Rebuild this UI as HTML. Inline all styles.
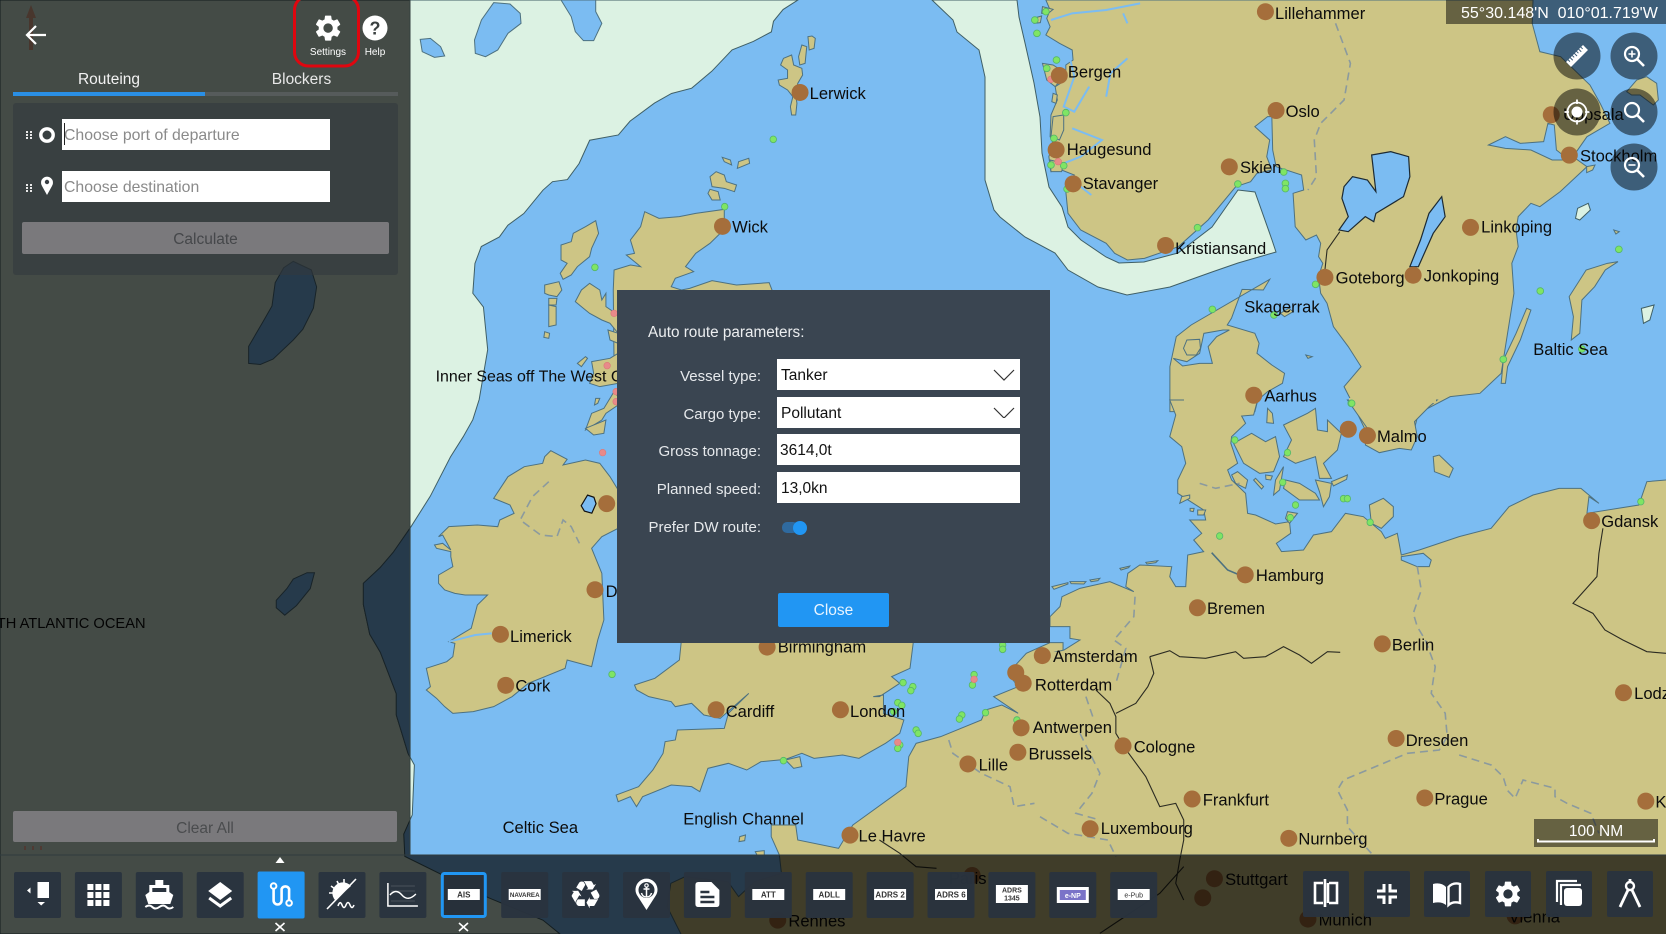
<!DOCTYPE html>
<html><head><meta charset="utf-8"><title>Route</title>
<style>
html,body{margin:0;padding:0;background:#7bbcf2}
#root{position:relative;width:1666px;height:934px;overflow:hidden;font-family:"Liberation Sans",sans-serif}
svg#map{position:absolute;left:0;top:0}
svg#map *{vector-effect:non-scaling-stroke}
.land{fill:#cdc585;stroke:#4d7180;stroke-width:1}
.sea{fill:#7bbcf2;stroke:#4d7180;stroke-width:1}
.lake{fill:#7bbcf2;stroke:#1c2a33;stroke-width:1.2}
.fj{fill:none;stroke:#7bbcf2;stroke-width:2}
.dash{fill:none;stroke:#8b9a9e;stroke-width:1.6;stroke-dasharray:8 5}
.bk{fill:none;stroke:#2b2b22;stroke-width:1.1}
.cd{fill:#a56e3b}
text.l{font-family:"Liberation Sans",sans-serif;font-size:15.6px;fill:#0c0c0c}
.tile{fill:#2a333e;fill-opacity:.96}
.lb{fill:#fff}
text.t{font-family:"Liberation Sans",sans-serif;font-size:8px;font-weight:bold;fill:#333;text-anchor:middle}
.w{fill:none;stroke:#fff}
#panel>div,#dlg>div{position:absolute}
.inp{background:#fff;color:#111;font-size:15.5px;line-height:33px;padding-left:4px;box-sizing:border-box}
.ph{color:#8a8a8a;padding-left:2px;font-size:15.8px}
.dl{color:#e6e9ec;font-size:15px;text-align:right;width:160px;left:-16px;line-height:20px}
</style></head><body><div id="root">
<svg id="map" width="1666" height="934" xmlns="http://www.w3.org/2000/svg">
<defs>
<ellipse id="gd" rx="8" ry="10" fill="#7fe564" stroke="#55b56a" stroke-width=".8"/>
<ellipse id="pd" rx="8" ry="10" fill="#e88a8a" stroke="#d77" stroke-width=".6"/>
</defs>
<rect width="1666" height="934" fill="#7bbcf2"/>

<!-- light green zones -->
<g fill="#dcf2e3" stroke="#3f5f66" stroke-width="1">
<path transform="scale(1.0625)" d="M0,0 L751,0 737,9 728,20 726,30 709,39 689,47 670,67 651,83 632,88 616,97 593,114 582,127 555,132 545,154 534,169 520,171 511,179 493,201 478,212 470,223 453,232 447,248 445,276 455,289 459,329 451,376 445,395 436,411 424,430 405,467 386,497 370,520 358,534 342,549 342,569 348,597 358,614 373,653 373,673 384,709 390,720 388,767 380,785 381,806 460,845 511,866 527,879 0,879 Z"/>
<path d="M932,0 953,20 957,32 979,50 985,77 985,110 985,180 994,210 1000,217 1025,237 1055,253 1068,270 1098,287 1127,295 1170,287 1212,272 1238,263 1276,252 1272,240 1255,192 1238,190 1212,227 1178,253 1144,262 1119,263 1106,257 1081,240 1068,227 1062,207 1049,187 1042,153 1040,117 1034,83 1025,43 1019,17 1017,0 Z"/>
</g>
<!-- deep pockets in the green zone -->
<g class="sea" transform="scale(1.0625)">
<path class="sea" d="M386,497 L386,713 384,709 373,673 373,653 358,614 348,597 342,569 342,549 358,534 370,520 Z"/>
<path class="sea" d="M276,246 293,254 298,270 295,290 285,310 276,320 257,338 245,343 234,342 234,326 248,302 256,288 259,266 267,252 Z"/>
<path class="sea" d="M296,539 292,554 279,570 268,579 260,572 260,565 270,554 276,545 289,539 Z"/>
</g>
<g transform="translate(410,0) scale(.40816,.33333)">
<path class="sea" d="M205,8 245,12 270,40 272,70 240,100 215,150 185,170 160,160 158,120 175,60 Z"/>
<path class="sea" d="M370,0 455,0 455,35 470,70 450,122 425,122 405,95 395,50 Z"/>
<path class="sea" d="M25,118 50,115 75,140 85,168 60,172 30,155 Z"/>
</g>

<!-- Z7: Scotland, islands -->
<g transform="translate(410,0) scale(.40816,.33333)" class="land">
<path class="land" d="M985,108 993,115 990,145 978,150 975,110Z"/>
<path class="land" d="M960,135 972,140 968,190 955,195 952,170Z"/>
<path class="land" d="M935,165 940,195 960,205 962,225 950,250 945,285 948,310 945,345 935,345 932,320 938,290 925,270 905,255 902,240 925,235 925,210 908,195 915,175Z"/>
<path class="land" d="M765,472 785,480 788,495 770,485Z"/>
<path class="land" d="M805,485 830,475 832,490 812,500 802,505Z"/>
<path class="land" d="M750,515 770,525 775,545 800,555 795,575 770,565 740,560 735,530Z"/>
<path class="land" d="M735,568 755,575 760,600 740,600 730,580Z"/>
<path class="land" d="M575,635 610,655 660,650 700,640 770,628 770,660 760,700 735,730 700,760 675,800 695,815 650,835 640,860 665,870 685,865 740,842 800,855 880,848 890,880 1000,1100 500,1100 498,870 500,810 540,795 565,800 530,765 550,760 540,720 565,680Z"/>
<path class="land" d="M455,662 462,700 445,745 440,770 410,800 395,825 375,838 368,820 385,790 370,780 370,735 395,725 400,700 430,680Z"/>
<path class="land" d="M330,855 365,845 372,870 360,890 340,885 330,880Z"/>
<path class="land" d="M340,895 360,895 358,915 340,915Z"/>
<path class="land" d="M340,915 358,920 358,975 340,980Z"/>
<path class="land" d="M330,995 342,1000 340,1015 328,1012Z"/>
<path class="land" d="M440,850 465,870 470,900 480,880 480,920 510,945 510,1000 490,970 470,960 440,940 425,925 405,905 420,870Z"/>
<path class="land" d="M485,990 510,1000 510,1030 490,1020Z"/>
<path class="land" d="M445,1085 490,1075 510,1060 510,1150 465,1160 440,1150 450,1120Z"/>
<path class="land" d="M500,1175 510,1190 510,1215 480,1240 470,1260 430,1290 445,1240 475,1225Z"/>
<path class="land" d="M455,1195 465,1195 460,1210 452,1215Z"/>
<path class="land" d="M410,1090 430,1070 435,1075 420,1100Z"/>
</g>

<!-- Z10: Ireland, England, France -->
<g transform="translate(410,420) scale(.40816,.33333)">
<path class="land" d="M345,92 385,118 375,135 430,120 465,130 490,170 510,210 510,325 470,350 445,385 470,460 475,600 460,660 445,740 385,720 380,745 330,770 290,790 250,830 205,860 155,875 105,880 85,860 65,835 40,810 50,800 40,745 90,725 105,710 110,670 95,665 150,625 165,555 190,525 135,525 110,520 85,510 70,490 70,465 105,440 100,410 100,395 65,385 60,375 80,370 100,390 80,345 70,350 95,320 165,315 215,320 220,300 255,280 245,255 205,235 240,170 280,140 325,130 330,110Z"/>
<path class="land" d="M670,600 1240,600 1225,745 1180,770 1200,790 1150,830 1135,830 1160,825 1160,880 1210,900 1200,940 1165,970 1100,1015 1060,1005 990,1015 960,1000 920,1018 860,1025 825,1050 780,1030 730,1045 710,1115 690,1100 640,1095 570,1130 555,1160 540,1130 510,1145 505,1125 560,1100 595,1050 620,1000 625,965 650,960 655,930 770,925 780,880 830,820 760,895 720,885 690,850 650,860 640,845 585,830 555,810 550,795 600,775 660,720Z"/>
<path class="land" d="M920,1020 955,1010 960,1040 940,1045Z"/>
<path class="land" d="M1085,1215 1215,1100 1222,1010 1240,970 1300,950 1400,900 1410,870 1450,855 1490,880 1430,830 1490,800 1465,760 1510,700 1568,668 1600,668 1600,1545 665,1545 630,1460 639,1390 674,1370 779,1385 805,1430 844,1385 910,1360 905,1305 885,1250 885,1215 945,1215 950,1260 1050,1285Z"/>
<path class="land" d="M808,1250 822,1245 820,1262 806,1265Z"/>
<path class="land" d="M846,1295 868,1292 868,1305 850,1305Z"/>
<path class="land" d="M430,25 480,0 475,40 450,45Z"/>
<path class="dash" d="M340,185 300,230 270,300 320,345 360,350 375,300 395,320 415,370"/>
<path class="dash" d="M1320,960 1330,1000 1400,1060 1470,1100 1480,1160 1530,1150"/>
<path class="bk" d="M1150,1260 1200,1300 1240,1340 1290,1345"/>
<path class="fj" d="M95,665 160,645 200,640"/>
</g>

<!-- Z8: Scandinavia -->
<g transform="translate(1000,0) scale(.42474,.33333)">
<path class="land" d="M108,0 118,30 110,55 118,80 108,105 140,130 170,150 172,180 155,195 155,240 130,260 135,300 120,345 118,410 125,430 115,470 120,515 145,510 175,525 155,575 160,640 190,690 250,730 270,760 300,780 340,775 420,740 490,660 555,560 590,545 605,520 640,510 628,470 635,420 600,380 630,350 640,350 642,450 650,500 710,525 715,570 690,580 695,680 720,720 745,705 755,730 750,770 760,790 750,830 755,880 770,910 785,980 820,1040 850,1100 830,1130 810,1160 830,1210 860,1290 975,1290 985,1240 1060,1190 1130,1180 1180,1120 1195,1000 1210,880 1205,790 1220,740 1215,690 1220,650 1250,610 1271,620 1319,575 1382,500 1349,470 1382,410 1436,370 1413,310 1389,255 1320,170 1271,155 1253,70 1255,0Z"/>
<path class="land" d="M78,55 98,48 95,68 80,70Z"/>
<path class="land" d="M100,20 125,28 112,42 98,40Z"/>
<path class="land" d="M100,190 125,195 155,220 130,260 110,240Z"/>
<path class="land" d="M125,280 135,285 132,310 122,305Z"/>
<path class="land" d="M125,350 150,345 150,390 140,420 120,410Z"/>
<path class="land" d="M118,480 150,490 145,515 120,515Z"/>
<path class="fj" d="M120,60 170,40 250,30 330,10"/>
<path class="fj" d="M300,70 290,40"/>
<path class="fj" d="M160,150 175,230 150,320 175,335 210,260"/>
<path class="fj" d="M250,290 260,220 300,175"/>
<path class="fj" d="M170,385 240,420 190,470 150,490"/>
<path class="fj" d="M160,530 215,585"/>
<path class="sea" d="M1150,435 1190,410 1225,430 1280,425 1290,370 1305,375 1310,450 1340,480 1300,480 1250,450 1190,445Z"/>
<path class="lake" d="M875,465 920,455 962,470 965,530 950,590 885,640 880,665 860,650 820,695 798,690 820,650 805,595 810,560 830,530 865,540 885,575 880,520Z"/>
<path class="lake" d="M1040,590 1048,650 1020,700 985,800 965,800 990,720 1010,640Z"/>
<path class="bk" d="M800,695 770,750 765,810"/>
<path class="land" d="M1430,790 1455,785 1425,810 1400,860 1370,900 1365,1000 1345,1020 1350,950 1340,890 1380,810Z"/>
<path class="land" d="M1240,925 1250,930 1225,1020 1195,1100 1190,1150 1180,1150 1185,1080 1215,1000Z"/>
<path d="M1360,625 1385,610 1390,630 1365,660 1355,655Z" fill="#dcf2e3" stroke="#3f5f66"/>
<path d="M1510,925 1540,915 1530,960 1515,970Z" fill="#dcf2e3" stroke="#3f5f66"/>
<path class="land" d="M1445,690 1458,695 1450,702Z"/>
<path class="land" d="M635,838 620,870 570,868 545,955 535,975 600,1000 610,1030 605,1060 640,1095 670,1120 665,1150 630,1175 607,1200 600,1235 400,1235 400,1100 415,1010 450,975Z"/>
<path class="land" d="M660,940 680,925 690,935 670,950Z"/>
<path class="sea" d="M408,1075 440,1085 470,1060 480,1000 525,990 540,990 510,1010 490,1040 500,1090 470,1090 430,1098Z"/>
<path class="land" d="M440,1020 470,1018 472,1045 462,1065 440,1065 432,1045Z"/>
<path class="land" d="M720,1065 735,1070 725,1075Z"/>
<path class="dash" d="M790,70 825,190 810,300 755,370 740,420 745,530 725,570"/>
</g>
<!-- Stockholm archipelago -->
<g transform="translate(1400,0) scale(.33333)">
<path class="land" d="M680,275 710,240 740,230 770,250 775,300 760,315 720,285 695,285Z"/>
<path class="land" d="M560,500 585,495 578,510 560,518Z"/>
</g>

<!-- Z9: Germany, Poland, Denmark -->
<g transform="translate(1040,400) scale(.39923,.33333)">
<path class="land" d="M325,0 545,0 535,45 505,48 515,70 480,110 478,130 495,190 470,210 480,240 515,280 520,340 540,345 590,372 625,365 628,400 592,430 605,455 660,450 685,405 730,395 765,340 810,350 855,395 865,415 895,400 905,465 950,450 1050,410 1130,385 1175,320 1235,285 1300,265 1355,265 1400,310 1375,290 1370,340 1500,315 1520,245 1568,240 1600,240 1600,1610 0,1610 0,745 25,760 60,750 100,720 75,715 75,680 25,680 25,650 50,620 55,590 100,565 175,545 235,575 215,560 220,520 250,495 330,500 325,530 340,560 365,560 370,465 410,455 385,420 405,400 375,360 415,360 410,330 345,280 345,240 365,190 355,140 325,110 340,45Z"/>
<path class="sea" d="M905,470 960,460 980,480 975,500 945,500 905,480Z"/>
<path class="land" d="M770,0 820,85 815,135 850,158 900,145 930,150 945,110 938,65 975,20 995,0Z"/>
<path class="land" d="M610,75 670,40 690,25 695,90 720,95 720,60 755,100 745,150 710,190 730,235 700,235 690,170 640,190 610,170 630,120Z"/>
<path class="land" d="M485,130 530,100 565,125 590,110 600,170 585,215 550,220 510,190Z"/>
<path class="land" d="M615,240 650,250 690,280 700,300 650,300 610,265Z"/>
<path class="land" d="M690,240 730,250 725,290 710,320 700,275Z"/>
<path class="land" d="M730,245 770,225 768,238 735,258Z"/>
<path class="land" d="M825,315 860,295 885,320 885,350 855,385 830,370Z"/>
<path class="land" d="M495,215 520,240 515,265 490,250 480,225Z"/>
<path class="land" d="M540,235 560,260 555,267 535,240Z"/>
<path class="land" d="M610,200 600,270 585,285 590,240Z"/>
<path class="land" d="M565,225 582,228 578,240 566,238Z"/>
<path class="land" d="M570,25 582,40 585,70 568,68Z"/>
<path class="land" d="M355,290 375,285 375,295 350,310Z"/>
<path class="land" d="M395,330 415,330 410,345 395,345Z"/>
<path class="land" d="M376,325 386,325 384,335 376,333Z"/>
<path class="land" d="M30,560 70,548 70,552 35,568Z"/>
<path class="land" d="M75,545 115,545 110,552 78,551Z"/>
<path class="land" d="M125,540 150,535 145,542 128,545Z"/>
<path class="land" d="M200,505 225,498 222,503 203,510Z"/>
<path class="land" d="M265,487 295,482 290,488 268,492Z"/>
<path class="land" d="M985,170 1000,165 1035,205 1025,232 988,215Z"/>
<path class="land" d="M620,335 645,340 625,370 615,355Z"/>
</g>
<!-- seam patches: hide joins between land pieces -->
<g fill="#cdc585">
<rect x="1184" y="397" width="66" height="17"/>
<rect x="1349" y="398" width="87" height="5"/>
<rect x="1368" y="420" width="44" height="16"/>
<rect x="1036" y="652" width="32" height="282"/>
<rect x="1040" y="855" width="626" height="9"/>
</g>
<g transform="translate(1040,400) scale(.39923,.33333)">
<path class="bk" d="M1410,385 1400,460 1395,530 1335,610 1385,640 1415,690 1460,720 1520,755 1568,760"/>
<path class="bk" d="M275,770 325,752 350,770 415,775 490,755 510,775 565,770 610,740 650,765 680,790 720,755 752,757"/>
<path class="bk" d="M275,770 285,820 270,860 240,910 190,940"/>
<path class="bk" d="M140,870 175,910 190,950 190,1000 210,1040 265,1130 300,1220 340,1210 360,1260 360,1320 350,1380 340,1450 360,1500"/>
<path class="bk" d="M360,1400 300,1480 200,1560 150,1600"/>
<path class="dash" d="M945,500 955,570 935,640 945,680 965,720 990,800 980,880 1015,940 1020,1010 1000,1050 920,1060 860,1090 760,1140 745,1170 770,1230 770,1280 830,1360"/>
<path class="dash" d="M1050,1065 1130,1095 1160,1130 1170,1170 1190,1195 1210,1140 1290,1165 1290,1190 1320,1210 1380,1240 1400,1300"/>
<path class="dash" d="M238,590 235,650 185,720 215,745 190,850"/>
<path class="dash" d="M400,250 440,265 500,250"/>
<path class="dash" d="M115,890 135,960"/>
<path class="dash" d="M100,1000 150,1120 130,1180 90,1240 150,1260"/>
<path class="dash" d="M0,1250 70,1300 170,1320 190,1370"/>
<path d="M430,458 470,510 500,525" fill="none" stroke="#4d7180" stroke-width="1.6"/>
</g>

<!-- green/pink buoys -->
<g transform="translate(410,0) scale(.40816,.33333)">
<use href="#gd" x="890" y="418"/><use href="#gd" x="771" y="620"/><use href="#gd" x="453" y="802"/>
<use href="#pd" x="500" y="940"/><use href="#pd" x="483" y="1097"/><use href="#pd" x="505" y="1175"/><use href="#pd" x="505" y="1205"/>
</g>
<g transform="translate(1000,0) scale(.42474,.33333)">
<use href="#gd" x="108" y="35"/><use href="#gd" x="82" y="60"/><use href="#gd" x="87" y="100"/><use href="#gd" x="133" y="180"/><use href="#gd" x="110" y="205"/><use href="#gd" x="155" y="338"/><use href="#gd" x="127" y="415"/><use href="#gd" x="120" y="495"/><use href="#gd" x="150" y="497"/><use href="#gd" x="158" y="567"/><use href="#gd" x="668" y="516"/><use href="#gd" x="560" y="552"/><use href="#gd" x="672" y="550"/><use href="#gd" x="672" y="566"/><use href="#gd" x="465" y="683"/><use href="#gd" x="743" y="853"/><use href="#gd" x="500" y="928"/><use href="#gd" x="645" y="945"/><use href="#gd" x="1457" y="748"/><use href="#gd" x="1272" y="873"/><use href="#gd" x="1370" y="1047"/><use href="#gd" x="1185" y="1078"/><use href="#gd" x="827" y="1210"/>
<use href="#pd" x="120" y="238"/><use href="#pd" x="137" y="485"/>
</g>
<g transform="translate(1040,400) scale(.39923,.33333)">
<use href="#gd" x="488" y="120"/><use href="#gd" x="620" y="158"/><use href="#gd" x="608" y="247"/><use href="#gd" x="640" y="315"/><use href="#gd" x="627" y="353"/><use href="#gd" x="450" y="408"/><use href="#gd" x="760" y="296"/><use href="#gd" x="770" y="296"/><use href="#gd" x="827" y="367"/><use href="#gd" x="781" y="10"/><use href="#gd" x="1505" y="305"/>
</g>
<g transform="translate(410,420) scale(.40816,.33333)">
<use href="#gd" x="495" y="763"/><use href="#gd" x="1208" y="788"/><use href="#gd" x="1232" y="800"/><use href="#gd" x="1227" y="812"/><use href="#gd" x="1195" y="848"/><use href="#gd" x="1205" y="856"/><use href="#gd" x="1185" y="875"/><use href="#gd" x="1240" y="930"/><use href="#gd" x="1245" y="940"/><use href="#gd" x="1200" y="975"/><use href="#gd" x="1195" y="985"/><use href="#gd" x="915" y="1022"/><use href="#gd" x="1452" y="675"/><use href="#gd" x="1452" y="688"/><use href="#gd" x="1382" y="764"/><use href="#gd" x="1378" y="795"/><use href="#gd" x="1352" y="885"/><use href="#gd" x="1346" y="897"/><use href="#gd" x="1410" y="878"/><use href="#gd" x="1487" y="900"/><use href="#gd" x="1497" y="918"/>
<use href="#pd" x="472" y="98"/><use href="#pd" x="1195" y="967"/><use href="#pd" x="1382" y="778"/>
</g>

<!-- city dots + labels (1568 frame) -->
<g transform="scale(1.0625)">
<g class="cd">
<circle cx="1191" cy="11" r="8"/><circle cx="997" cy="71" r="8"/><circle cx="753" cy="87" r="8"/><circle cx="680" cy="213" r="8"/><circle cx="1201" cy="104" r="8"/><circle cx="1157" cy="157" r="8"/><circle cx="994" cy="141" r="8"/><circle cx="1010" cy="173" r="8"/><circle cx="1097" cy="231" r="8"/><circle cx="1247" cy="261" r="8"/><circle cx="1330" cy="259" r="8"/><circle cx="1384" cy="214" r="8"/><circle cx="1460" cy="108" r="8"/><circle cx="1477" cy="146" r="8"/><circle cx="1180" cy="372" r="8"/><circle cx="1269" cy="404" r="8"/><circle cx="1287" cy="410" r="8"/><circle cx="1172" cy="541" r="8"/><circle cx="1127" cy="572" r="8"/><circle cx="1301" cy="606" r="8"/><circle cx="1498" cy="490" r="8"/><circle cx="1528" cy="652" r="8"/><circle cx="981" cy="617" r="8"/><circle cx="956" cy="633" r="8"/><circle cx="963" cy="643" r="8"/><circle cx="961" cy="685" r="8"/><circle cx="958" cy="708" r="8"/><circle cx="1057" cy="702" r="8"/><circle cx="911" cy="719" r="8"/><circle cx="1314" cy="695" r="8"/><circle cx="1122" cy="752" r="8"/><circle cx="1341" cy="751" r="8"/><circle cx="1026" cy="780" r="8"/><circle cx="1213" cy="789" r="8"/><circle cx="1549" cy="754" r="8"/><circle cx="800" cy="786" r="8"/><circle cx="791" cy="668" r="8"/><circle cx="674" cy="668" r="8"/><circle cx="722" cy="609" r="8"/><circle cx="471" cy="597" r="8"/><circle cx="476" cy="645" r="8"/><circle cx="560" cy="555" r="8"/><circle cx="571" cy="474" r="8"/><circle cx="732" cy="866" r="8"/><circle cx="1143" cy="827" r="8"/><circle cx="1231" cy="865" r="8"/><circle cx="1426" cy="862" r="8"/><circle cx="1132" cy="845" r="8"/><circle cx="915" cy="824" r="8"/>
</g>
<path d="M553,466 559,468 561,474 557,483 550,481 547,476Z" fill="#7bbcf2" stroke="#111" stroke-width="1.2"/>
<g>
<text class="l" x="1200" y="18">Lillehammer</text><text class="l" x="1005" y="73">Bergen</text><text class="l" x="762" y="93">Lerwick</text><text class="l" x="689" y="219">Wick</text><text class="l" x="1210" y="110">Oslo</text><text class="l" x="1167" y="163">Skien</text><text class="l" x="1004" y="146">Haugesund</text><text class="l" x="1019" y="178">Stavanger</text><text class="l" x="1106" y="239">Kristiansand</text><text class="l" x="1257" y="267">Goteborg</text><text class="l" x="1340" y="265">Jonkoping</text><text class="l" x="1394" y="219">Linkoping</text><text class="l" x="1471" y="113">Uppsala</text><text class="l" x="1487" y="152">Stockholm</text><text class="l" x="1171" y="294">Skagerrak</text><text class="l" x="1443" y="334">Baltic Sea</text><text class="l" x="1190" y="378">Aarhus</text><text class="l" x="1296" y="416">Malmo</text><text class="l" x="1182" y="547">Hamburg</text><text class="l" x="1136" y="578">Bremen</text><text class="l" x="1310" y="612">Berlin</text><text class="l" x="1507" y="496">Gdansk</text><text class="l" x="1538" y="658">Lodz</text><text class="l" x="991" y="623">Amsterdam</text><text class="l" x="974" y="650">Rotterdam</text><text class="l" x="972" y="690">Antwerpen</text><text class="l" x="968" y="715">Brussels</text><text class="l" x="1067" y="708">Cologne</text><text class="l" x="921" y="725">Lille</text><text class="l" x="1323" y="702">Dresden</text><text class="l" x="1132" y="758">Frankfurt</text><text class="l" x="1350" y="757">Prague</text><text class="l" x="1036" y="785">Luxembourg</text><text class="l" x="1222" y="795">Nurnberg</text><text class="l" x="1558" y="760">Krakow</text><text class="l" x="808" y="792">Le Havre</text><text class="l" x="800" y="675">London</text><text class="l" x="683" y="675">Cardiff</text><text class="l" x="732" y="614">Birmingham</text><text class="l" x="480" y="604">Limerick</text><text class="l" x="485" y="651">Cork</text><text class="l" x="570" y="562">Dublin</text><text class="l" x="410" y="359" style="font-size:15px">Inner Seas off The West Coast of Scotland</text><text class="l" x="473" y="784">Celtic Sea</text><text class="l" x="643" y="776">English Channel</text>
<text class="l" x="137" y="591" text-anchor="end" style="font-size:13.8px">NORTH ATLANTIC OCEAN</text>
<text class="l" x="742" y="872">Rennes</text><text class="l" x="1153" y="833">Stuttgart</text><text class="l" x="1241" y="871">Munich</text><text class="l" x="1420" y="868">Vienna</text><text class="l" x="893" y="832">Paris</text>
</g>
</g>

<!-- dark overlay -->
<path d="M0,0H410V855H1666V934H0Z" fill="#000" fill-opacity=".69"/>
<path d="M0,855H1666" stroke="#2f3b3f" stroke-width="1"/>
<path d="M410,0V855" stroke="#33403f" stroke-width="1"/>

<!-- coordinates, scale -->
<rect x="1446" width="220" height="24" fill="#000" fill-opacity=".5"/>
<text x="1461" y="18" fill="#fff" style="font-size:16px;font-family:'Liberation Sans',sans-serif">55°30.148'N&#160;&#160;010°01.719'W</text>
<rect x="1534" y="819" width="124" height="28" fill="#000" fill-opacity=".5"/>
<text x="1596" y="836" fill="#fff" text-anchor="middle" style="font-size:15.5px;font-family:'Liberation Sans',sans-serif">100 NM</text>
<path d="M1538,839V841.5H1654V839" fill="none" stroke="#fff" stroke-width="2"/>

<!-- map buttons -->
<g fill="#000" fill-opacity=".5">
<circle cx="1577" cy="56" r="23.5"/>
<circle cx="1634" cy="56" r="23.5"/>
<circle cx="1577" cy="112" r="23.5"/>
<circle cx="1634" cy="112" r="23.5"/>
<circle cx="1634" cy="167" r="23.5"/>
</g>
<g transform="translate(1577,56) rotate(-45)">
<rect x="-12" y="-3.5" width="24" height="7" fill="#fff"/>
<path d="M-9,-4V-1M-6,-4V0M-3,-4V-1M0,-4V0M3,-4V-1M6,-4V0M9,-4V-1" stroke="#3b5a76" stroke-width="1"/>
</g>
<g fill="none" stroke="#fff" stroke-width="2.2">
<circle cx="1632" cy="54" r="7"/><path d="M1637,59 1644,66" stroke-width="2.6"/><path d="M1628.5,54H1635.5M1632,50.5V57.5" stroke-width="1.6"/>
<circle cx="1632" cy="110" r="7"/><path d="M1637,115 1644,122" stroke-width="2.6"/>
<circle cx="1632" cy="165" r="7"/><path d="M1637,170 1644,177" stroke-width="2.6"/><path d="M1628.5,165H1635.5" stroke-width="1.6"/>
<circle cx="1577" cy="112" r="9.5" stroke-width="1.8"/><path d="M1577,99.5V104M1577,120V124.5M1564.5,112H1569M1585,112H1589.5" stroke-width="1.8"/>
</g>
<circle cx="1577" cy="112" r="5.5" fill="#fff"/>

<!-- tiles -->
<g>
<g transform="translate(37.5,895)"><rect class="tile" x="-23.5" y="-23" width="47" height="46" rx="2"/><rect class="lb" x="0" y="-13" width="11.5" height="16"/><path class="lb" d="M-10.5,-4.5 -7,-7.5V-1.5Z"/><path class="lb" d="M0,7H7.5L3.7,10.5Z"/></g>
<g transform="translate(98.4,895)"><rect class="tile" x="-23.5" y="-23" width="47" height="46" rx="2"/><g class="lb"><rect x="-11" y="-11" width="6" height="6"/><rect x="-3" y="-11" width="6" height="6"/><rect x="5" y="-11" width="6" height="6"/><rect x="-11" y="-3" width="6" height="6"/><rect x="-3" y="-3" width="6" height="6"/><rect x="5" y="-3" width="6" height="6"/><rect x="-11" y="5" width="6" height="6"/><rect x="-3" y="5" width="6" height="6"/><rect x="5" y="5" width="6" height="6"/></g></g>
<g transform="translate(159.3,895)"><rect class="tile" x="-23.5" y="-23" width="47" height="46" rx="2"/><path class="lb" d="M-4,-15H4V-10H10V-3L14,0 11,9H-11L-14,0-10,-3V-10H-4Z"/><path d="M-7,-7H7V-3H-7Z" fill="#2a333e"/><path d="M-14,12 Q-10,9 -7,12 T0,12 T7,12 T14,12" fill="none" stroke="#fff" stroke-width="2"/></g>
<g transform="translate(220.2,895)"><rect class="tile" x="-23.5" y="-23" width="47" height="46" rx="2"/><path class="lb" d="M0,-13 12,-4 0,5 -12,-4Z"/><path class="w" stroke-width="3" d="M-11,3 0,11 11,3"/></g>
<g transform="translate(281.1,895)"><rect x="-23.5" y="-23.5" width="47" height="47" rx="2" fill="#2196f3"/><path class="w" stroke-width="2.6" d="M-7.5,-6V5.5A4,4 0 0 0 0.5,5.5V-6A4,4 0 0 1 8,-6V5"/><circle cx="-7.5" cy="-9" r="2.8" class="w" stroke-width="2"/><circle cx="8" cy="8" r="2.8" class="w" stroke-width="2"/></g>
<g transform="translate(342,895)"><rect class="tile" x="-23.5" y="-23" width="47" height="46" rx="2"/><path class="lb" d="M-7,5A10,10 0 0 1 9,-9Z"/><path class="w" stroke-width="1.6" d="M14,-16 -15,14M-13,-2H-9M-11,-9-7,-6M-5,-14-3,-10M2,-16V-12M-4,11Q-2,5 0,10T4,10T8,10T12,10"/></g>
<g transform="translate(402.9,895)"><rect class="tile" x="-23.5" y="-23" width="47" height="46" rx="2"/><path class="w" stroke-width="1.5" d="M-15,-12V11H15"/><path class="w" stroke-width="1.4" d="M-13,0Q-7,-7 -1,0T13,-1"/><path d="M-12,-9H12M-12,-4H12M-12,6H12" stroke="#fff" stroke-opacity=".15"/></g>
<g transform="translate(463.8,895)"><rect x="-21.5" y="-21.5" width="43" height="43" rx="2" fill="#27303a" stroke="#2196f3" stroke-width="3"/><rect class="lb" x="-16" y="-6" width="32" height="11"/><text class="t" y="2.5">AIS</text></g>
<g transform="translate(524.7,895)"><rect class="tile" x="-23.5" y="-23" width="47" height="46" rx="2"/><rect class="lb" x="-16" y="-6" width="32" height="11"/><text class="t" y="2" style="font-size:6.2px">NAVAREA</text></g>
<g transform="translate(585.6,895)"><rect class="tile" x="-23.5" y="-23" width="47" height="46" rx="2"/><text y="13" text-anchor="middle" fill="#fff" style="font-size:38px;font-family:'DejaVu Sans',sans-serif">♻</text></g>
<g transform="translate(646.5,895)"><rect class="tile" x="-23.5" y="-23" width="47" height="46" rx="2"/><path class="lb" d="M0,15 L-9,1 A11,11 0 1 1 9,1Z"/><circle cy="-5" r="8" fill="#2a333e"/><path class="w" stroke-width="1.5" d="M0,-8V2M-3,-6H3M-5,-2Q-4,2 0,2T5,-2"/><circle cy="-9.5" r="1.7" class="w" stroke-width="1.2"/></g>
<g transform="translate(707.4,895)"><rect class="tile" x="-23.5" y="-23" width="47" height="46" rx="2"/><path class="lb" d="M-12,-10Q-12,-13 -9,-13H4L12,-5V9Q12,12 9,12H-9Q-12,12 -12,9Z"/><path d="M-7,-3H2M-7,2H7M-7,7H7" stroke="#2a333e" stroke-width="2.4"/></g>
<g transform="translate(768.3,895)"><rect class="tile" x="-23.5" y="-23" width="47" height="46" rx="2"/><rect class="lb" x="-16" y="-6" width="32" height="11"/><text class="t" y="2.5">ATT</text></g>
<g transform="translate(829.2,895)"><rect class="tile" x="-23.5" y="-23" width="47" height="46" rx="2"/><rect class="lb" x="-16" y="-6" width="32" height="11"/><text class="t" y="2.5">ADLL</text></g>
<g transform="translate(890.1,895)"><rect class="tile" x="-23.5" y="-23" width="47" height="46" rx="2"/><rect class="lb" x="-16" y="-6" width="32" height="11"/><text class="t" y="2.5">ADRS 2</text></g>
<g transform="translate(951,895)"><rect class="tile" x="-23.5" y="-23" width="47" height="46" rx="2"/><rect class="lb" x="-16" y="-6" width="32" height="11"/><text class="t" y="2.5">ADRS 6</text></g>
<g transform="translate(1011.9,895)"><rect class="tile" x="-23.5" y="-23" width="47" height="46" rx="2"/><rect class="lb" x="-16" y="-10" width="32" height="18"/><text class="t" y="-2.5" style="font-size:7px">ADRS</text><text class="t" y="5.5" style="font-size:7px">1345</text></g>
<g transform="translate(1072.8,895)"><rect class="tile" x="-23.5" y="-23" width="47" height="46" rx="2"/><rect class="lb" x="-16" y="-8" width="32" height="16"/><rect x="-13" y="-5" width="26" height="10" fill="#7a73c8"/><text class="t" y="3" style="fill:#fff;font-size:7px">e-NP</text></g>
<g transform="translate(1133.7,895)"><rect class="tile" x="-23.5" y="-23" width="47" height="46" rx="2"/><rect class="lb" x="-16" y="-6" width="32" height="11"/><text class="t" y="2.5" style="font-size:7px;font-weight:normal">e-Pub</text></g>

<g transform="translate(1326,894)"><rect class="tile" x="-23" y="-23" width="46" height="46" rx="2"/><path class="w" stroke-width="2.6" d="M-3,-11H-11V9H-3M3,-11H11V9H3"/><path class="w" stroke-width="2.6" d="M-1,-15V13M2,-11V9"/></g>
<g transform="translate(1387,894)"><rect class="tile" x="-23" y="-23" width="46" height="46" rx="2"/><path class="w" stroke-width="3" d="M-3,-10V-3H-10M3,-10V-3H10M-10,3H-3V10M10,3H3V10"/></g>
<g transform="translate(1447,894)"><rect class="tile" x="-23" y="-23" width="46" height="46" rx="2"/><path class="lb" d="M-14,-10Q-6,-12 -1,-7V11Q-6,7 -14,9Z"/><path class="w" stroke-width="2.4" d="M1.5,-7Q6,-12 13,-10V9Q6,7 1.5,11Z"/></g>
<g transform="translate(1508,894)"><rect class="tile" x="-23" y="-23" width="46" height="46" rx="2"/><path class="lb" transform="translate(-15.5,-15.5) scale(1.29)" d="M19.14 12.94c.04-.3.06-.61.06-.94 0-.32-.02-.64-.07-.94l2.03-1.58c.18-.14.23-.41.12-.61l-1.92-3.32c-.12-.22-.37-.29-.59-.22l-2.39.96c-.5-.38-1.03-.7-1.62-.94l-.36-2.54c-.04-.24-.24-.41-.48-.41h-3.84c-.24 0-.43.17-.47.41l-.36 2.54c-.59.24-1.13.57-1.62.94l-2.39-.96c-.22-.08-.47 0-.59.22L2.74 8.87c-.12.21-.08.47.12.61l2.03 1.58c-.05.3-.09.63-.09.94s.02.64.07.94l-2.03 1.58c-.18.14-.23.41-.12.61l1.92 3.32c.12.22.37.29.59.22l2.39-.96c.5.38 1.03.7 1.62.94l.36 2.54c.05.24.24.41.48.41h3.84c.24 0 .44-.17.47-.41l.36-2.54c.59-.24 1.13-.56 1.62-.94l2.39.96c.22.08.47 0 .59-.22l1.92-3.32c.12-.22.07-.47-.12-.61l-2.01-1.58zM12 15.6c-1.98 0-3.6-1.62-3.6-3.6s1.62-3.6 3.6-3.6 3.6 1.62 3.6 3.6-1.62 3.6-3.6 3.6z"/></g>
<g transform="translate(1569,894)"><rect class="tile" x="-23" y="-23" width="46" height="46" rx="2"/><path class="w" stroke-width="2.2" d="M-12,8V-13H8M-8,11V-9H12"/><rect class="lb" x="-5" y="-6" width="18" height="18" rx="3"/></g>
<g transform="translate(1630,894)"><rect class="tile" x="-23" y="-23" width="46" height="46" rx="2"/><circle cy="-8" r="4" class="w" stroke-width="2.4"/><path class="w" stroke-width="2.8" d="M0,-15V-12M-2,-4 -10,13M2,-4 10,13"/></g>

<path class="lb" d="M280,857 284.5,863H275.500Z"/>
<path class="w" stroke-width="1.6" d="M275.500,923 284.500,931M284.500,923 275.500,931"/>
<path class="w" stroke-width="1.6" d="M459,923 468,931M468,923 459,931"/>
</g>

<!-- north arrow -->
<g fill="#4a2e22" fill-opacity=".7"><path d="M31,5 36,18H33V50H29V18H26Z"/></g>
<path d="M25,846V850M33,846V850M41,846V850" stroke="#5a2a20" stroke-width="1"/>
</svg>

<div id="panel" style="position:absolute;left:0;top:0;width:410px;height:860px">
<svg style="position:absolute;left:0;top:0" width="410" height="70">
<path d="M46,35H28M36,26 27,35 36,44" fill="none" stroke="#fff" stroke-width="2.2"/>
<rect x="294.500" y="-4" width="64" height="70" rx="14" fill="none" stroke="#e0060f" stroke-width="3"/>
<path fill="#fff" transform="translate(312.500,12.500) scale(1.3)" d="M19.14 12.94c.04-.3.06-.61.06-.94 0-.32-.02-.64-.07-.94l2.03-1.58c.18-.14.23-.41.12-.61l-1.92-3.32c-.12-.22-.37-.29-.59-.22l-2.39.96c-.5-.38-1.03-.7-1.62-.94l-.36-2.54c-.04-.24-.24-.41-.48-.41h-3.84c-.24 0-.43.17-.47.41l-.36 2.54c-.59.24-1.13.57-1.62.94l-2.39-.96c-.22-.08-.47 0-.59.22L2.74 8.87c-.12.21-.08.47.12.61l2.03 1.58c-.05.3-.09.63-.09.94s.02.64.07.94l-2.03 1.58c-.18.14-.23.41-.12.61l1.92 3.32c.12.22.37.29.59.22l2.39-.96c.5.38 1.03.7 1.62.94l.36 2.54c.05.24.24.41.48.41h3.84c.24 0 .44-.17.47-.41l.36-2.54c.59-.24 1.13-.56 1.62-.94l2.39.96c.22.08.47 0 .59-.22l1.92-3.32c.12-.22.07-.47-.12-.61l-2.01-1.58zM12 15.6c-1.98 0-3.6-1.62-3.6-3.6s1.62-3.6 3.6-3.6 3.6 1.62 3.6 3.6-1.62 3.6-3.6 3.6z"/>
<circle cx="375" cy="28" r="12.500" fill="#fff"/>
<text x="375" y="34.500" text-anchor="middle" fill="#3a4040" style="font-size:18px;font-weight:bold;font-family:'Liberation Sans',sans-serif">?</text>
<text x="328" y="55" text-anchor="middle" fill="#fff" style="font-size:10px;font-family:'Liberation Sans',sans-serif">Settings</text>
<text x="375" y="55" text-anchor="middle" fill="#fff" style="font-size:10px;font-family:'Liberation Sans',sans-serif">Help</text>
</svg>
<div style="left:13px;top:69px;width:192px;text-align:center;color:#f2f2f2;font-size:15.500px;line-height:22px">Routeing</div>
<div style="left:205px;top:69px;width:193px;text-align:center;color:#e8e8e8;font-size:15.500px;line-height:22px">Blockers</div>
<div style="left:13px;top:92px;width:385px;height:4px;background:#565b5b"></div>
<div style="left:13px;top:92px;width:192px;height:4px;background:#2a8fe5"></div>
<div style="left:13px;top:103px;width:385px;height:172px;background:rgba(50,56,62,.6);border-radius:3px"></div>
<div class="inp ph" style="left:62px;top:119px;width:268px;height:31px">Choose port of departure</div>
<div style="left:64px;top:123px;width:1px;height:22px;background:#222"></div>
<div class="inp ph" style="left:62px;top:171px;width:268px;height:31px">Choose destination</div>
<svg style="position:absolute;left:20px;top:120px" width="40" height="85">
<g fill="#e8e8e8"><rect x="6" y="11" width="2" height="2"/><rect x="10" y="11" width="2" height="2"/><rect x="6" y="14" width="2" height="2"/><rect x="10" y="14" width="2" height="2"/><rect x="6" y="17" width="2" height="2"/><rect x="10" y="17" width="2" height="2"/>
<rect x="6" y="64" width="2" height="2"/><rect x="10" y="64" width="2" height="2"/><rect x="6" y="67" width="2" height="2"/><rect x="10" y="67" width="2" height="2"/><rect x="6" y="70" width="2" height="2"/><rect x="10" y="70" width="2" height="2"/></g>
<circle cx="27" cy="15" r="6.200" fill="none" stroke="#fff" stroke-width="3.400"/>
<path d="M27,75 L22,66 A6,6 0 1 1 32,66Z" fill="#fff"/><circle cx="27" cy="62" r="2.200" fill="#393f44"/>
</svg>
<div style="left:22px;top:222px;width:367px;height:32px;background:#7a797c;border-radius:2px;color:#45474a;font-size:15.500px;line-height:36px;text-align:center">Calculate</div>
<div style="left:13px;top:811px;width:384px;height:31px;background:#7a797c;border-radius:2px;color:#4a4c4e;font-size:15.500px;line-height:35px;text-align:center">Clear All</div>
</div>

<div id="dlg" style="position:absolute;left:617px;top:290px;width:433px;height:353px;background:#3a4551">
<div style="left:31px;top:33px;color:#eceef0;font-size:15.300px;line-height:20px">Auto route parameters:</div>
<div class="dl" style="top:77px">Vessel type:</div>
<div class="dl" style="top:115px">Cargo type:</div>
<div class="dl" style="top:152px">Gross tonnage:</div>
<div class="dl" style="top:190px">Planned speed:</div>
<div class="dl" style="top:228px">Prefer DW route:</div>
<div class="inp" style="left:160px;top:69px;width:243px;height:31px">Tanker</div>
<div class="inp" style="left:160px;top:107px;width:243px;height:31px">Pollutant</div>
<div class="inp" style="left:160px;top:144px;width:243px;height:31px;padding-left:3px">3614,0t</div>
<div class="inp" style="left:160px;top:182px;width:243px;height:31px">13,0kn</div>
<svg style="position:absolute;left:376px;top:78px" width="22" height="50"><path d="M1,2 11,12 21,2M1,40 11,50 21,40" fill="none" stroke="#333" stroke-width="1.200"/></svg>
<div style="left:165px;top:232px;width:16px;height:11px;background:#2f6a9f;border-radius:5px"></div>
<div style="left:176px;top:231px;width:14px;height:14px;background:#2196f3;border-radius:50%"></div>
<div style="left:161px;top:303px;width:111px;height:34px;background:#2196f3;border-radius:2px;color:#e8f4ff;font-size:15.500px;line-height:36px;text-align:center">Close</div>
</div>
</div></body></html>
